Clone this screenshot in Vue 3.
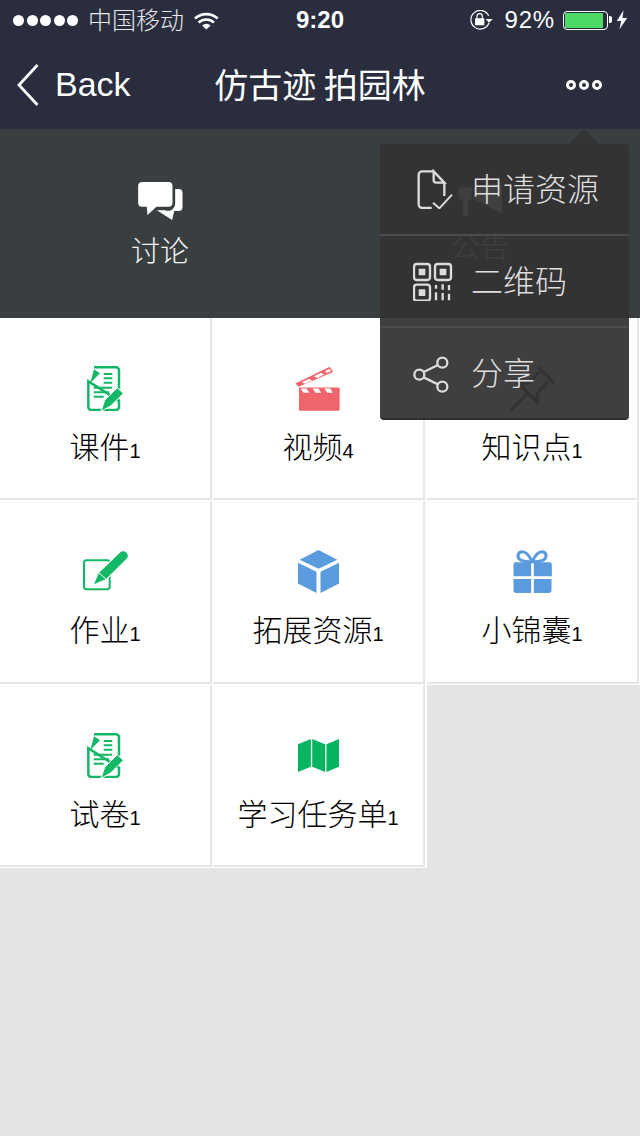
<script setup>
const cells = [
  { name: "课件", count: 1, icon: "doc" },
  { name: "视频", count: 4, icon: "clapper" },
  { name: "知识点", count: 1, icon: "pin" },
  { name: "作业", count: 1, icon: "edit" },
  { name: "拓展资源", count: 1, icon: "cube" },
  { name: "小锦囊", count: 1, icon: "gift" },
  { name: "试卷", count: 1, icon: "doc" },
  { name: "学习任务单", count: 1, icon: "map" },
];
</script>

<template>
  <div class="page">
    <header class="top">
      <div class="status">
        <div class="status-left">
          <div class="signal"><i></i><i></i><i></i><i></i><i></i></div>
          <span class="carrier">中国移动</span>
          <svg class="wifi" width="25" height="19" viewBox="583 33 75 56">
            <path d="M586 55a50 50 0 0 1 68 0" fill="none" stroke="#fff" stroke-width="8" />
            <path d="M597 67a34 34 0 0 1 46 0" fill="none" stroke="#fff" stroke-width="8" />
            <path d="M607 76a19 19 0 0 1 26 0L620 88z" fill="#fff" />
          </svg>
        </div>
        <span class="time">9:20</span>
        <div class="status-right">
          <svg width="24" height="20" viewBox="452 31 72 60">
            <path d="M511 48a28 28 0 1 0 1 22" fill="none" stroke="#fff" stroke-width="3.5" />
            <path d="M502 58h21l-10.500 11z" fill="#fff" />
            <rect x="470" y="56" width="28" height="21" rx="2" fill="#fff" />
            <path d="M476 57v-7a8 8 0 0 1 16 0v7" fill="none" stroke="#fff" stroke-width="3.500" />
          </svg>
          <span class="battery-text">92%</span>
          <div class="battery"><div class="battery-fill"></div></div>
          <svg class="bolt" width="12" height="20" viewBox="892 31 35 60">
            <path d="M914 32L894 64h13L902 89L925 55H911z" fill="#fff" />
          </svg>
        </div>
      </div>
      <nav class="nav">
        <div class="back">
          <svg width="24" height="44" viewBox="0 0 24 44">
            <path d="M21.500 2L3 22l18.500 20" fill="none" stroke="#fff" stroke-width="2.800" />
          </svg>
          <span>Back</span>
        </div>
        <h1 class="title">仿古迹 拍园林</h1>
        <div class="more"><i></i><i></i><i></i></div>
      </nav>
    </header>

    <section class="tabs">
      <div class="tab">
        <svg width="45" height="38" viewBox="414 156 134 114">
          <path d="M426 156h79a12 12 0 0 1 12 12v50a12 12 0 0 1-12 12h-36l-27 25-2-25h-14a12 12 0 0 1-12-12v-50a12 12 0 0 1 12-12z" fill="#fff" />
          <path d="M525 177h10a12 12 0 0 1 12 12v42a12 12 0 0 1-12 12h-13l-6 27-46-29 h25a22 22 0 0 0 30-22z" fill="#fff" />
        </svg>
        <span>讨论</span>
      </div>
      <div class="tab">
        <svg width="44" height="34" viewBox="235 175 130 100">
          <path d="M245 190h30v36h-10v42a8 8 0 0 1-16 0v-42h-4a8 8 0 0 1-8-8v-20a8 8 0 0 1 8-8zM282 192l83-17v92l-83-42z" fill="#fff" />
        </svg>
        <span>公告</span>
      </div>
    </section>

    <section class="grid">
      <div v-for="cell in cells" :key="cell.name" class="cell">
        <div class="cell-inner">
          <div class="cell-icon">
            <svg v-if="cell.icon === 'doc'" width="36" height="45" viewBox="85 48 108 135">
              <path d="M106 52h66a9 9 0 0 1 9 9v55M181 152v19a9 9 0 0 1-9 9h-74a9 9 0 0 1-9-9V94z" fill="none" stroke="#12b866" stroke-width="7.500" />
              <path d="M106 58l18 12-29 29z" fill="#12b866" />
              <path d="M135 72h26M135 85h26M135 98h26M105 113h55M105 127h46M105 140h30" stroke="#12b866" stroke-width="6" />
              <path d="M127 184l11-33 38-38 18 17-38 38z" fill="#12b866" stroke="#fff" stroke-width="3" />
            </svg>
            <svg v-else-if="cell.icon === 'clapper'" width="46" height="45" viewBox="708 50 137 136">
              <rect x="719" y="115" width="123" height="70" rx="3" fill="#f0646c" />
              <path d="M724 118h18l8 13h-17zM760 118h18l8 13h-17zM796 118h18l7 13h-17z" fill="#fff" />
              <path d="M708 103L812 52l10 16-104 45z" fill="#f0646c" />
              <path d="M727 99l21-10 11 4-22 11zM764 81l21-10 11 4-22 11zM798 65l13-6 5 6-13 6z" fill="#fff" />
            </svg>
            <svg v-else-if="cell.icon === 'pin'" width="45" height="47" viewBox="395 708 135 140">
              <g transform="translate(398 842) rotate(45)" fill="none" stroke="#25364a" stroke-width="10" stroke-linecap="round" stroke-linejoin="round">
                <path d="M0 0V-72" />
                <path d="M-42 -72H42" />
                <path d="M-20 -135V-98Q-20 -84 -42 -72M20 -135V-98Q20 -84 42 -72" />
                <path d="M-30 -148H30" />
              </g>
            </svg>
            <svg v-else-if="cell.icon === 'edit'" width="45" height="40" viewBox="72 50 135 120">
              <rect x="75" y="77.500" width="77" height="87" rx="7" fill="none" stroke="#12b866" stroke-width="6" />
              <path d="M102 152l17-36 62-60a11 11 0 0 1 24 16l-63 62z" fill="#12b866" stroke="#fff" stroke-width="6" />
              <path d="M105 150l14-33 62-60a10 10 0 0 1 23 15l-63 62z" fill="#12b866" />
              <path d="M120 116l22 19" stroke="#fff" stroke-width="3" />
            </svg>
            <svg v-else-if="cell.icon === 'cube'" width="41" height="43" viewBox="716 47 122 128">
              <path d="M777 47l56 29-56 27-56-27zM716 85l55 27v63l-55-28zM838 85l-55 27v63l55-28z" fill="#5a9bde" />
            </svg>
            <svg v-else-if="cell.icon === 'gift'" width="39" height="43" viewBox="130 47 116 129">
              <path d="M187 82c-8-18-18-30-30-30-12 0-18 16-6 24 8 5 22 6 36 6zM187 82c8-18 18-30 30-30 12 0 16 16 5 24-8 5-21 6-35 6z" fill="none" stroke="#5a9bde" stroke-width="9" />
              <path d="M138 84h46v42h-53v-35a7 7 0 0 1 7-7zM192 84h47a7 7 0 0 1 7 7v35h-54zM131 134h53v42h-45a8 8 0 0 1-8-8zM192 134h53v34a8 8 0 0 1-8 8h-45z" fill="#5a9bde" />
            </svg>
            <svg v-else width="41" height="33" viewBox="717 60 121 97">
              <path d="M717 75l38-15v82l-38 15zM759 60l38 15v82l-38-15zM801 75l37-15v82l-37 15z" fill="#05b460" />
            </svg>
          </div>
          <div class="cell-label">{{ cell.name }}<span class="num">{{ cell.count }}</span></div>
        </div>
      </div>
    </section>

    <div class="popup">
      <div class="popup-row row-1">
        <svg width="40" height="40" viewBox="98 117 120 120">
          <path d="M160 124h-34a11 11 0 0 0-11 11v88a11 11 0 0 0 11 11h28M192 158v40M160 124l32 34h-24a8 8 0 0 1-8-8z" fill="none" stroke="#dcdcdc" stroke-width="7" />
          <path d="M158 218l19 17 38-41" fill="none" stroke="#dcdcdc" stroke-width="6" />
        </svg>
        <span>申请资源</span>
      </div>
      <div class="popup-row row-2">
        <svg width="40" height="40" viewBox="98 392 120 120">
          <g fill="none" stroke="#dcdcdc" stroke-width="7">
            <rect x="101" y="401" width="48" height="48" rx="8" />
            <rect x="164" y="401" width="48" height="48" rx="8" />
            <rect x="101" y="463" width="48" height="48" rx="8" />
          </g>
          <g fill="#dcdcdc">
            <rect x="115" y="415" width="20" height="20" rx="2" />
            <rect x="178" y="415" width="20" height="20" rx="2" />
            <rect x="115" y="477" width="20" height="20" rx="2" />
          </g>
          <path d="M167 464v11M167 486v24M187 462v16M187 488v22M206 464v16M206 490v20" stroke="#dcdcdc" stroke-width="7" />
        </svg>
        <span>二维码</span>
      </div>
      <div class="popup-row row-3">
        <svg width="40" height="40" viewBox="98 670 120 120">
          <g fill="none" stroke="#dcdcdc" stroke-width="7">
            <circle cx="186" cy="699" r="15" />
            <circle cx="117" cy="735" r="15" />
            <circle cx="186" cy="771" r="15" />
            <path d="M130 727l43-21M130 743l43 21" />
          </g>
        </svg>
        <span>分享</span>
      </div>
    </div>
  </div>
</template>

<style>
html,
body {
  margin: 0;
  background: #e3e4e6;
}
</style>

<style scoped>
.page {
  position: relative;
  width: 640px;
  height: 1136px;
  overflow: hidden;
  background: #e3e4e6;
  font-family: "Liberation Sans", "Noto Sans CJK SC", sans-serif;
}

.top {
  height: 129px;
  background: #292d3e;
  color: #fff;
}

/* status bar */
.status {
  height: 40px;
  padding: 0 12px;
  display: grid;
  grid-template-columns: 1fr auto 1fr;
  align-items: center;
  font-size: 24px;
}

.status-left,
.status-right {
  display: flex;
  align-items: center;
}

.status-right {
  justify-content: flex-end;
}

.signal {
  display: flex;
  gap: 2.500px;
  margin: 0 10px 0 1px;
}

.signal i {
  width: 11px;
  height: 11px;
  border-radius: 50%;
  background: #fff;
}

.carrier {
  margin-top: -3px;
  color: #e8e8ea;
  font-weight: 300;
}

.wifi {
  margin-left: 10px;
}

.time {
  font-weight: 700;
}

.battery-text {
  margin: 0 8px 0 12px;
  letter-spacing: 0.8px;
}

.battery {
  position: relative;
  width: 45px;
  height: 19px;
  box-sizing: border-box;
  border: 1.500px solid #fff;
  border-radius: 4px;
  padding: 1px 4px 1px 1px;
}

.battery::after {
  content: "";
  position: absolute;
  right: -5px;
  top: 4px;
  width: 3px;
  height: 7px;
  background: #fff;
  border-radius: 0 2px 2px 0;
}

.battery-fill {
  height: 100%;
  background: #4cd964;
}

.bolt {
  margin-left: 8px;
}

/* nav bar */
.nav {
  height: 89px;
  padding: 0 16px;
  display: grid;
  grid-template-columns: 1fr auto 1fr;
  align-items: center;
}

.back {
  display: flex;
  align-items: center;
  gap: 15px;
  font-size: 34px;
}

.title {
  margin: -2px 0 0;
  font-size: 34px;
  font-weight: 400;
  word-spacing: -2px;
}

.more {
  display: flex;
  justify-content: flex-end;
  gap: 3px;
  padding-right: 22px;
}

.more i {
  width: 10px;
  height: 10px;
  box-sizing: border-box;
  border: 3px solid #fff;
  border-radius: 50%;
}

/* two dark tabs */
.tabs {
  height: 189px;
  display: flex;
  background: #393e40;
}

.tab {
  flex: 1;
  display: flex;
  flex-direction: column;
  align-items: center;
  padding-top: 53px;
  font-size: 29px;
  line-height: 40px;
  font-weight: 300;
  color: #f4f4f4;
}

.tab svg {
  display: block;
  margin-bottom: 12px;
}

/* tile grid */
.grid {
  display: grid;
  grid-template-columns: 213px 214px 213px;
  grid-template-rows: 183px 184px 183px;
}

.cell {
  background: #fff;
  padding: 0 1px 1px 0;
}

.cell:nth-child(3n + 2) {
  padding-right: 2px;
}

.cell-inner {
  height: 100%;
  box-sizing: border-box;
  padding-top: 46px;
  border-right: 2px solid #e6e6e6;
  border-bottom: 2px solid #e6e6e6;
  display: flex;
  flex-direction: column;
  align-items: center;
}

.cell-icon {
  height: 48px;
  display: flex;
  align-items: center;
  justify-content: center;
  margin-bottom: 16px;
}

.cell-label {
  font-size: 30px;
  line-height: 40px;
  font-weight: 300;
  color: #000;
}

.num {
  font-size: 20px;
}

/* dropdown over the page */
.popup {
  position: absolute;
  left: 380px;
  top: 144px;
  width: 249px;
  height: 276px;
  box-sizing: border-box;
  background: rgba(51, 51, 51, 0.94);
  border-radius: 4px;
  border-bottom: 2px solid #2d2e2f;
  color: #dedede;
  font-size: 32px;
  font-weight: 300;
}

.popup::before {
  content: "";
  position: absolute;
  left: 189px;
  top: -15px;
  border-left: 15px solid transparent;
  border-right: 15px solid transparent;
  border-bottom: 15px solid rgba(51, 51, 51, 0.94);
}

.popup-row {
  display: flex;
  align-items: center;
  gap: 18px;
  padding-left: 33px;
  box-sizing: border-box;
  border-bottom: 2px solid #4a4c4d;
}

.popup-row span {
  margin-top: -4px;
}

.row-1 {
  height: 92px;
}

.row-2 {
  height: 92px;
}

.row-3 {
  height: 90px;
  border-bottom: none;
}
</style>
